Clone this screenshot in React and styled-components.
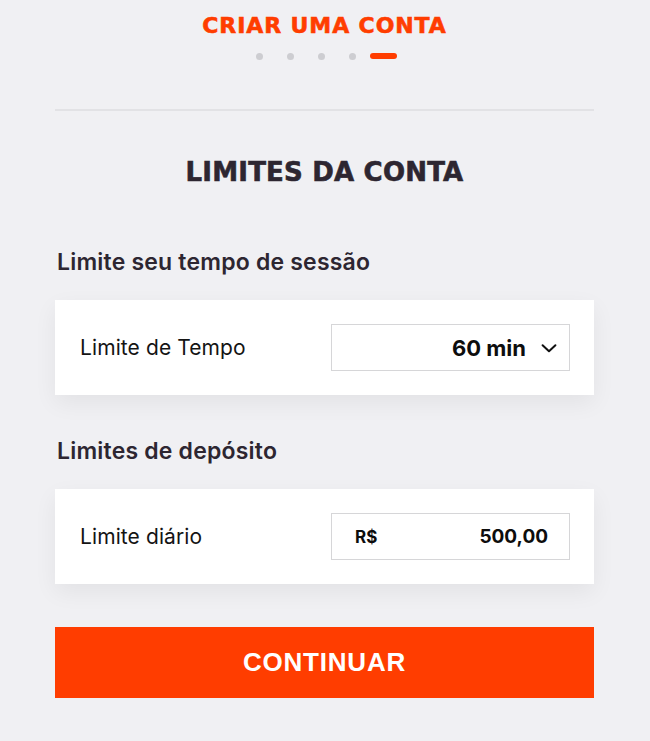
import styled, { createGlobalStyle } from "styled-components";

const ORANGE = "#ff3d00";
const DARK = "#2d2631";

const GlobalStyle = createGlobalStyle`
    * { box-sizing: border-box; }
    body {
        margin: 0;
        background: #f0f0f3;
        font-family: Inter, "Liberation Sans", sans-serif;
        -webkit-font-smoothing: antialiased;
    }
`;

const Page = styled.main`
    width: 650px;
    min-height: 741px;
    padding: 13px 56px 0 55px;
    display: flex;
    flex-direction: column;
`;

const Header = styled.header`
    display: flex;
    flex-direction: column;
    align-items: center;
    h1 {
        margin: 0;
        font-family: "DejaVu Sans", "Liberation Sans", sans-serif;
        font-weight: 700;
        font-size: 22px;
        line-height: 26px;
        color: ${ORANGE};
        letter-spacing: 0.9px;
        -webkit-text-stroke: 0.6px ${ORANGE};
    }
`;

const Steps = styled.div`
    display: flex;
    align-items: center;
    gap: 24px;
    margin: 13px 0 0 3px;
    height: 8px;
`;

const Step = styled.span`
    width: ${(p) => (p.$active ? "27px" : "7px")};
    height: ${(p) => (p.$active ? "6px" : "7px")};
    border-radius: 4px;
    background: ${(p) => (p.$active ? ORANGE : "#cdcdd1")};
    margin-left: ${(p) => (p.$active ? "-10px" : "0")};
`;

const Divider = styled.hr`
    width: 100%;
    border: none;
    height: 2px;
    background: #e2e2e5;
    margin: 49px 0 0;
`;

const Title = styled.h2`
    margin: 47px 0 0;
    text-align: center;
    font-family: "DejaVu Sans", "Liberation Sans", sans-serif;
    font-weight: 700;
    font-size: 26px;
    line-height: 28px;
    color: ${DARK};
    letter-spacing: 0.2px;
    -webkit-text-stroke: 0.6px ${DARK};
`;

const SectionLabel = styled.h3`
    margin: ${(p) => p.$top} 0 0 2px;
    font-weight: 600;
    font-size: 23px;
    line-height: 28px;
    color: ${DARK};
    letter-spacing: 0.2px;
`;

const Card = styled.section`
    margin-top: 24px;
    height: 95px;
    background: #fff;
    box-shadow: 0 8px 22px rgba(0, 0, 0, 0.06);
    padding: 0 24px 0 25px;
    display: flex;
    align-items: center;
    justify-content: space-between;
`;

const FieldLabel = styled.span`
    font-size: 21px;
    color: #141414;
    letter-spacing: 0.1px;
`;

const Field = styled.div`
    width: 239px;
    height: 47px;
    border: 1px solid #d6d6d8;
    display: flex;
    align-items: center;
    justify-content: ${(p) => (p.$money ? "space-between" : "flex-end")};
    padding: ${(p) => (p.$money ? "0 21px 0 23px" : "0 9px 0 0")};
    gap: 12px;
    color: #0d0d0d;
    font-weight: 700;
`;

const Value = styled.span`
    font-size: ${(p) => p.$size || "20px"};
`;

const Button = styled.button`
    margin-top: 43px;
    height: 71px;
    border: none;
    background: ${ORANGE};
    color: #fff;
    font-family: "Liberation Sans", Arial, sans-serif;
    font-weight: 700;
    font-size: 26px;
    letter-spacing: 0.8px;
    cursor: pointer;
`;

function Chevron() {
    return (
        <svg width="22" height="22" viewBox="0 0 24 24" fill="none" stroke="#111" strokeWidth="2.2" strokeLinecap="round" strokeLinejoin="round">
            <polyline points="5 9 12 15.5 19 9" />
        </svg>
    );
}

export default function App() {
    return (
        <>
            <GlobalStyle />
            <Page>
                <Header>
                    <h1>CRIAR UMA CONTA</h1>
                    <Steps>
                        {[0, 1, 2, 3, 4].map((i) => <Step key={i} $active={i === 4} />)}
                    </Steps>
                </Header>
                <Divider />
                <Title>LIMITES DA CONTA</Title>

                <SectionLabel $top="62px">Limite seu tempo de sessão</SectionLabel>
                <Card>
                    <FieldLabel>Limite de Tempo</FieldLabel>
                    <Field>
                        <Value $size="22px">60 min</Value>
                        <Chevron />
                    </Field>
                </Card>

                <SectionLabel $top="42px">Limites de depósito</SectionLabel>
                <Card>
                    <FieldLabel>Limite diário</FieldLabel>
                    <Field $money>
                        <Value $size="17px">R$</Value>
                        <Value $size="19px">500,00</Value>
                    </Field>
                </Card>

                <Button>CONTINUAR</Button>
            </Page>
        </>
    );
}
